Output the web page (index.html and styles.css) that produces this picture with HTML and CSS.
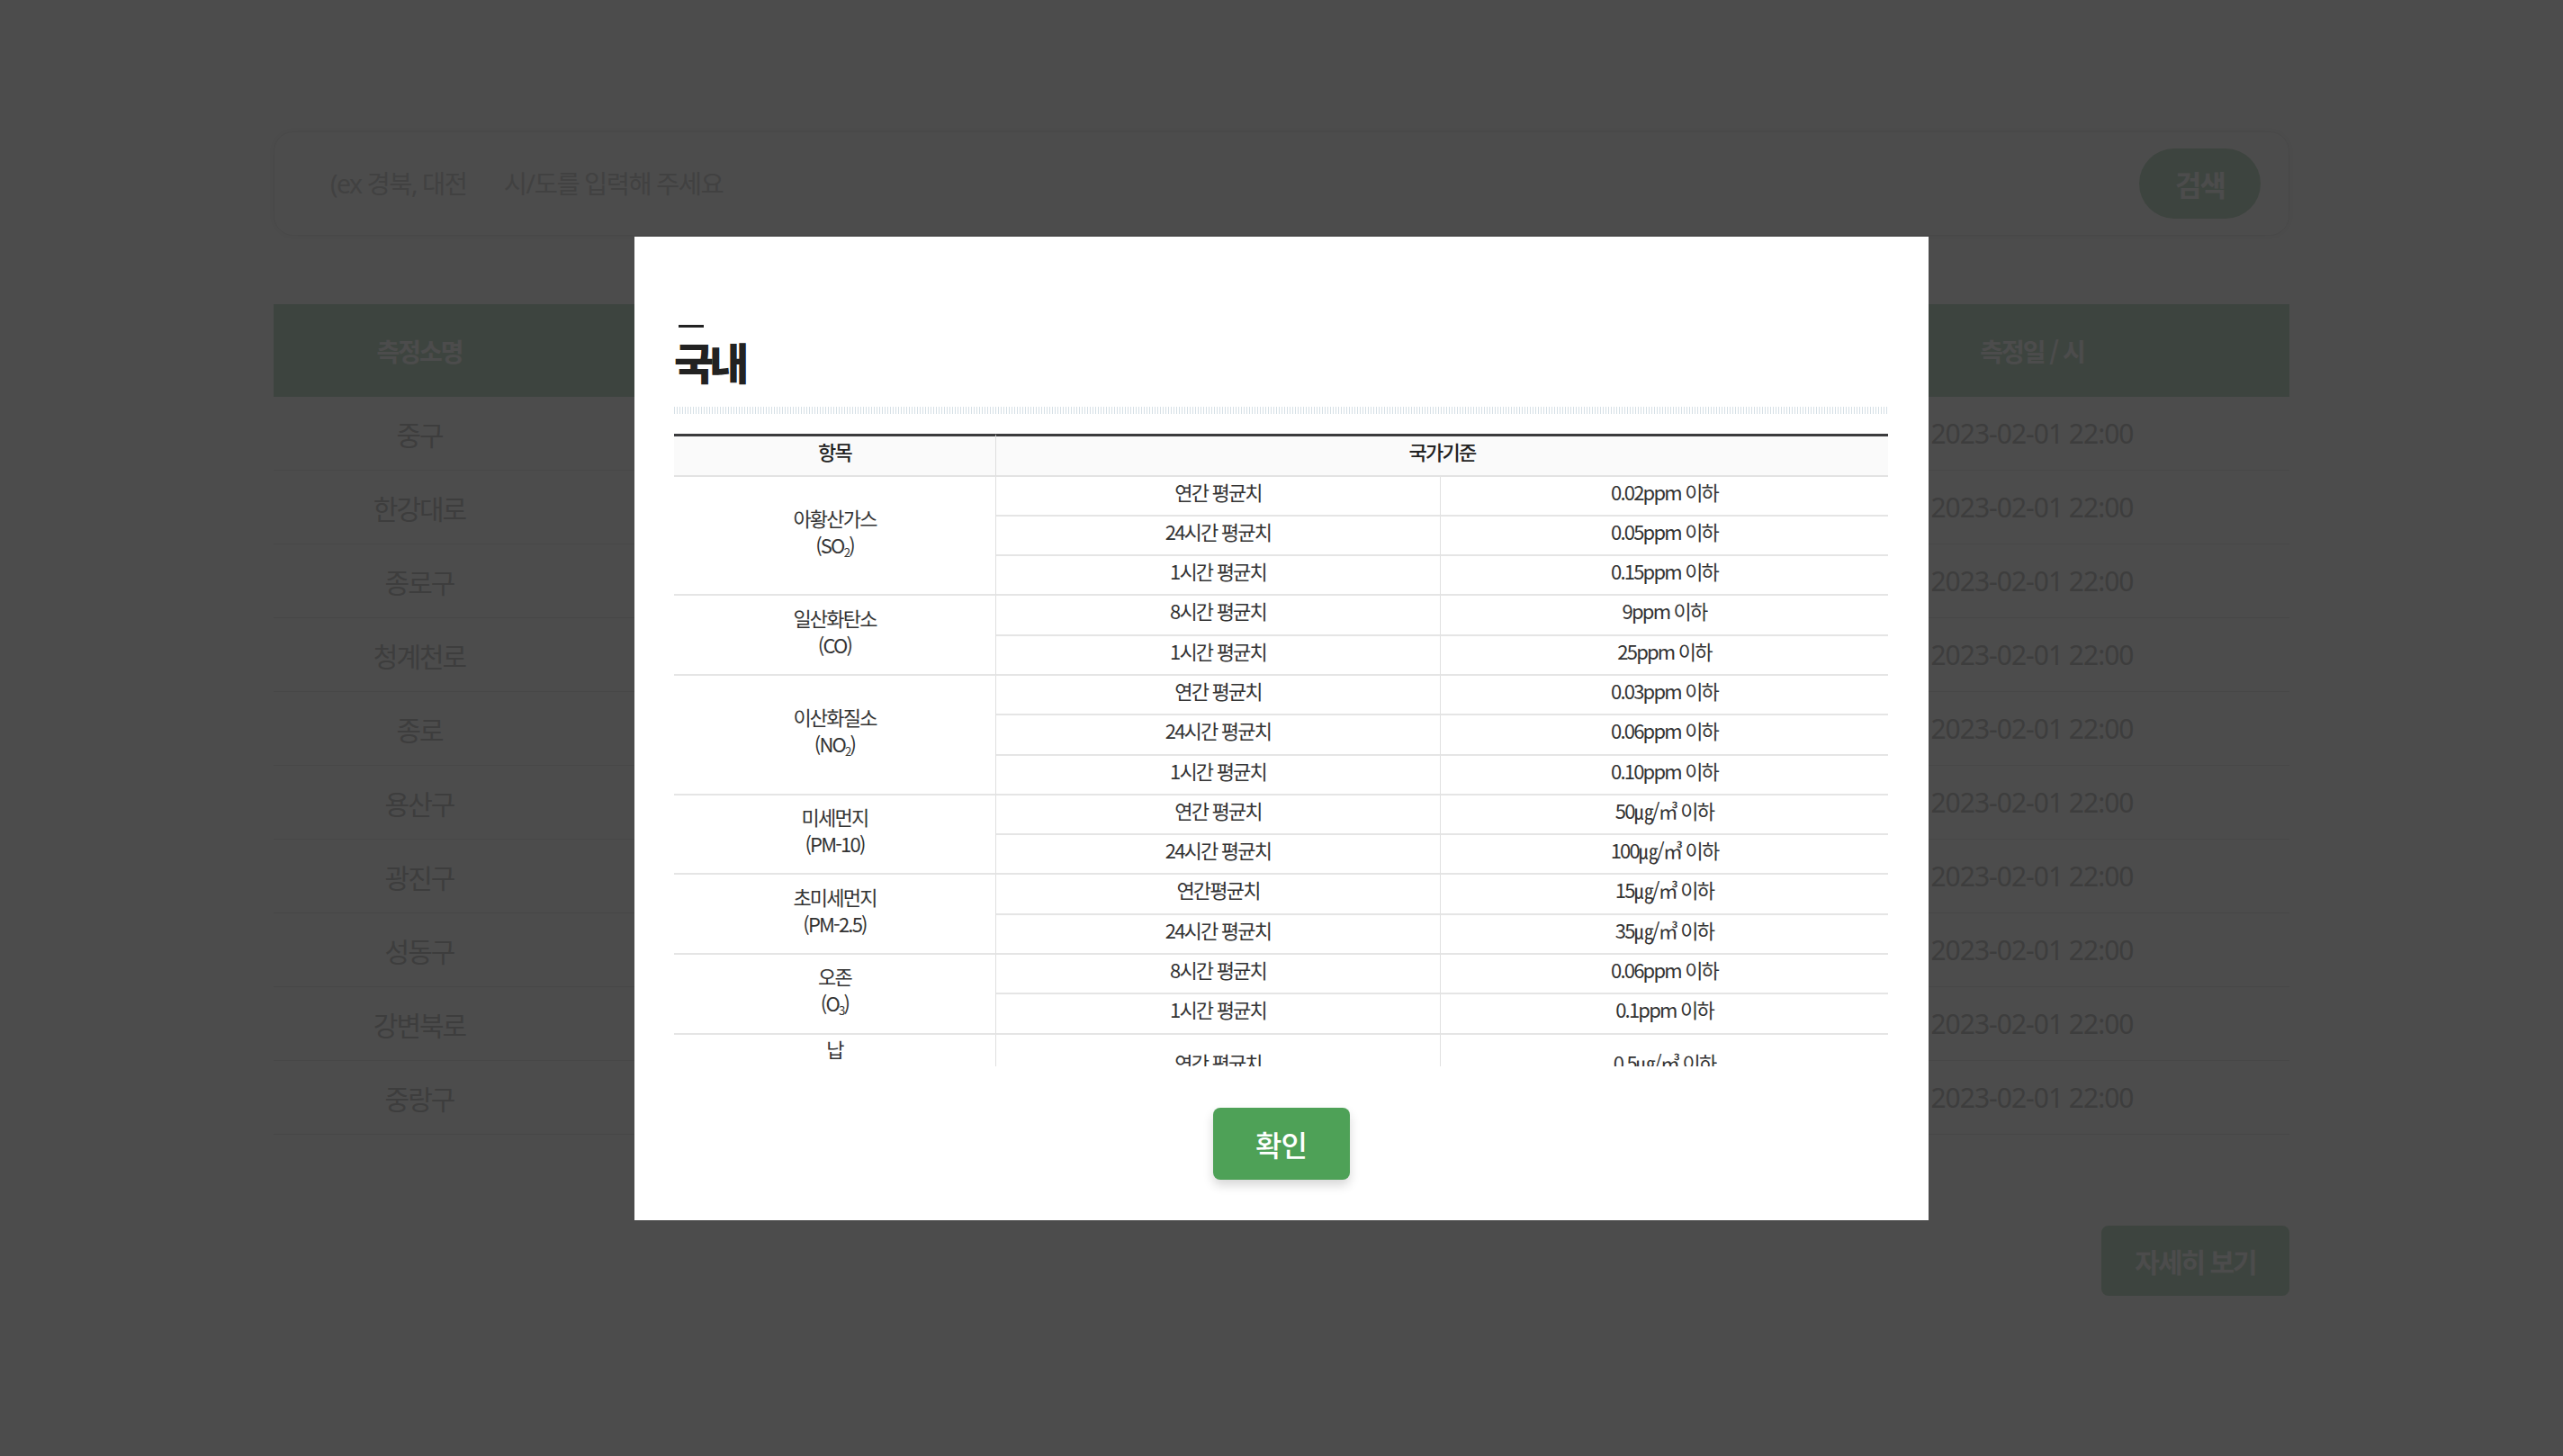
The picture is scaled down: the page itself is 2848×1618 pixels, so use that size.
FILE: index.html
```html
<!DOCTYPE html>
<html lang="ko">
<head>
<meta charset="utf-8">
<title>대기환경 기준</title>
<link rel="stylesheet" href="styles.css">
</head>
<body>
<div class="page">
  <form class="search">
    <input class="search-input" type="text" placeholder="(ex 경북, 대전&#160;&#160;&#160;&#160;&#160;&#160; 시/도를 입력해 주세요">
    <button class="search-btn" type="button">검색</button>
  </form>

  <table class="list">
    <colgroup>
      <col class="c-name"><col class="c-mid"><col class="c-mid"><col class="c-mid"><col class="c-mid"><col class="c-date">
    </colgroup>
    <thead>
      <tr><th>측정소명</th><th>통합대기</th><th>미세먼지</th><th>초미세먼지</th><th>오존</th><th>측정일 / 시</th></tr>
    </thead>
    <tbody>
      <tr><td>중구</td><td>보통</td><td>35</td><td>18</td><td>0.031</td><td class="date">2023-02-01 22:00</td></tr>
      <tr><td>한강대로</td><td>보통</td><td>38</td><td>20</td><td>0.028</td><td class="date">2023-02-01 22:00</td></tr>
      <tr><td>종로구</td><td>보통</td><td>33</td><td>17</td><td>0.030</td><td class="date">2023-02-01 22:00</td></tr>
      <tr><td>청계천로</td><td>보통</td><td>36</td><td>19</td><td>0.027</td><td class="date">2023-02-01 22:00</td></tr>
      <tr><td>종로</td><td>보통</td><td>34</td><td>18</td><td>0.029</td><td class="date">2023-02-01 22:00</td></tr>
      <tr><td>용산구</td><td>보통</td><td>31</td><td>16</td><td>0.032</td><td class="date">2023-02-01 22:00</td></tr>
      <tr><td>광진구</td><td>보통</td><td>37</td><td>21</td><td>0.026</td><td class="date">2023-02-01 22:00</td></tr>
      <tr><td>성동구</td><td>보통</td><td>32</td><td>17</td><td>0.030</td><td class="date">2023-02-01 22:00</td></tr>
      <tr><td>강변북로</td><td>보통</td><td>40</td><td>22</td><td>0.025</td><td class="date">2023-02-01 22:00</td></tr>
      <tr><td>중랑구</td><td>보통</td><td>30</td><td>15</td><td>0.033</td><td class="date">2023-02-01 22:00</td></tr>
    </tbody>
  </table>

  <button class="more" type="button">자세히 보기</button>
</div>

<div class="overlay">
  <div class="modal">
    <div class="modal-dash"></div>
    <h2 class="modal-title">국내</h2>
    <div class="modal-sep"></div>
    <div class="std-scroll">
      <table class="std">
        <colgroup><col class="s-item"><col class="s-period"><col class="s-value"></colgroup>
        <thead>
          <tr><th class="th-item">항목</th><th colspan="2">국가기준</th></tr>
        </thead>
        <tbody>
          <tr><td class="item" rowspan="3"><span class="item-name">아황산가스<br>(SO<sub>2</sub>)</span></td><td class="period">연간 평균치</td><td>0.02ppm 이하</td></tr>
          <tr><td class="period">24시간 평균치</td><td>0.05ppm 이하</td></tr>
          <tr><td class="period">1시간 평균치</td><td>0.15ppm 이하</td></tr>

          <tr><td class="item" rowspan="2"><span class="item-name">일산화탄소<br>(CO)</span></td><td class="period">8시간 평균치</td><td>9ppm 이하</td></tr>
          <tr><td class="period">1시간 평균치</td><td>25ppm 이하</td></tr>

          <tr><td class="item" rowspan="3"><span class="item-name">이산화질소<br>(NO<sub>2</sub>)</span></td><td class="period">연간 평균치</td><td>0.03ppm 이하</td></tr>
          <tr><td class="period">24시간 평균치</td><td>0.06ppm 이하</td></tr>
          <tr><td class="period">1시간 평균치</td><td>0.10ppm 이하</td></tr>

          <tr><td class="item" rowspan="2"><span class="item-name">미세먼지<br>(PM-10)</span></td><td class="period">연간 평균치</td><td>50㎍/㎥ 이하</td></tr>
          <tr><td class="period">24시간 평균치</td><td>100㎍/㎥ 이하</td></tr>

          <tr><td class="item" rowspan="2"><span class="item-name">초미세먼지<br>(PM-2.5)</span></td><td class="period">연간평균치</td><td>15㎍/㎥ 이하</td></tr>
          <tr><td class="period">24시간 평균치</td><td>35㎍/㎥ 이하</td></tr>

          <tr><td class="item" rowspan="2"><span class="item-name">오존<br>(O<sub>3</sub>)</span></td><td class="period">8시간 평균치</td><td>0.06ppm 이하</td></tr>
          <tr><td class="period">1시간 평균치</td><td>0.1ppm 이하</td></tr>

          <tr><td class="item"><span class="item-name">납<br>(Pb)</span></td><td class="period">연간 평균치</td><td>0.5㎍/㎥ 이하</td></tr>

          <tr><td class="item"><span class="item-name">벤젠<br>(C<sub>6</sub>H<sub>6</sub>)</span></td><td class="period">연간 평균치</td><td>5㎍/㎥ 이하</td></tr>
        </tbody>
      </table>
    </div>
    <button class="confirm" type="button">확인</button>
  </div>
</div>
</body>
</html>
```

FILE: styles.css
```css
html, body {
  margin: 0;
  padding: 0;
}

body {
  background: #ffffff;
  font-family: "Noto Sans CJK KR", "Noto Sans", sans-serif;
  color: #333;
}

/* ---------- background page ---------- */
.page {
  width: 2240px;
  margin: 0 auto;
  padding-top: 146px;
}

.search {
  box-sizing: border-box;
  height: 116px;
  display: flex;
  align-items: center;
  padding: 0 31px 0 62px;
  border: 1px solid #f1f1f1;
  border-radius: 22px;
  box-shadow: 0 0 12px rgba(0, 0, 0, 0.05);
  margin: 0;
}

.search-input {
  flex: 1;
  border: none;
  outline: none;
  background: transparent;
  font-family: "Noto Sans", "Noto Sans CJK KR", sans-serif;
  font-size: 28.5px;
  letter-spacing: -1.5px;
  color: #333;
  padding: 0;
}

.search-input::placeholder {
  color: #d9d9d9;
}

.search-btn {
  width: 135px;
  height: 78px;
  border: none;
  border-radius: 39px;
  background: #cee3d2;
  color: #ffffff;
  font-family: "Noto Sans CJK KR", sans-serif;
  font-size: 32px;
  font-weight: 700;
  letter-spacing: -2px;
  padding: 0;
}

.list {
  width: 100%;
  margin-top: 76px;
  border-collapse: collapse;
  table-layout: fixed;
}

.list .c-name { width: 324px; }
.list .c-mid { width: 336px; }
.list .c-date { width: 572px; }

.list th {
  height: 103px;
  padding: 0;
  background: #cee3d2;
  color: #ffffff;
  font-size: 28px;
  font-weight: 700;
  letter-spacing: -2px;
}

.list td {
  height: 81px;
  padding: 0;
  text-align: center;
  font-size: 30px;
  letter-spacing: -2px;
  color: #cdcdcd;
  border-bottom: 1px solid #efefef;
}

.list td.date {
  font-family: "Noto Sans", sans-serif;
  font-size: 30px;
  letter-spacing: -1px;
}

.more {
  display: block;
  margin: 101px 0 0 auto;
  width: 209px;
  height: 78px;
  border: none;
  border-radius: 8px;
  background: #cee3d2;
  color: #ffffff;
  font-family: "Noto Sans CJK KR", sans-serif;
  font-size: 30px;
  font-weight: 700;
  letter-spacing: -2px;
  padding: 0;
}

/* ---------- modal ---------- */
.overlay {
  position: fixed;
  inset: 0;
  background: rgba(0, 0, 0, 0.7);
  display: flex;
  align-items: center;
  justify-content: center;
}

.modal {
  box-sizing: border-box;
  width: 1438px;
  height: 1093px;
  background: #ffffff;
  padding: 98px 45px 45px 44px;
  display: flex;
  flex-direction: column;
}

.modal-dash {
  width: 28px;
  height: 3px;
  margin-left: 5px;
  background: #222;
  flex: none;
}

.modal-title {
  margin: 9px 0 0;
  height: 56px;
  font-size: 48px;
  line-height: 56px;
  font-weight: 900;
  letter-spacing: -5px;
  color: #222;
  flex: none;
}

.modal-sep {
  margin-top: 23px;
  height: 8px;
  flex: none;
  background: repeating-linear-gradient(90deg, #d6e0e6 0 1px, #ffffff 1px 3px);
}

.std-scroll {
  margin-top: 22px;
  height: 703px;
  flex: none;
  overflow-y: auto;
  scrollbar-width: none;
}

.std-scroll::-webkit-scrollbar {
  display: none;
}

.std {
  width: 100%;
  border-collapse: separate;
  border-spacing: 0;
  table-layout: fixed;
  font-size: 22px;
  letter-spacing: -1.8px;
  color: #333;
}

.std .s-item { width: 358px; }
.std .s-period { width: 494px; }

.std th {
  padding: 3px 0 13px;
  line-height: 27px;
  background: #fafafa;
  border-top: 3px solid #3b3b3d;
  border-bottom: 2px solid #e3e3e3;
  font-weight: 500;
  color: #222;
}

.std th.th-item {
  border-right: 1px solid #dedede;
}

.std td {
  padding: 0 0 10px;
  line-height: 32.3px;
  text-align: center;
  border-bottom: 2px solid #e5e5e5;
}

.std td.item,
.std td.period {
  border-right: 1px solid #e0e0e0;
}

.item-name {
  display: block;
  line-height: 30px;
}

.std sub {
  font-size: 0.6em;
  line-height: 0;
  vertical-align: -0.3em;
}

.confirm {
  flex: none;
  margin: 46px auto 0;
  width: 152px;
  height: 80px;
  border: none;
  border-radius: 8px;
  background: #4ea157;
  color: #ffffff;
  font-family: "Noto Sans CJK KR", sans-serif;
  font-size: 32px;
  font-weight: 500;
  letter-spacing: -1px;
  box-shadow: 0 6px 12px rgba(0, 0, 0, 0.16);
  padding: 0;
}
```
